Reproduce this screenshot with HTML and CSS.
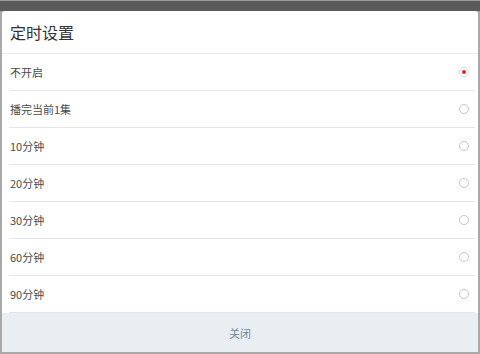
FILE: index.html
```html
<!DOCTYPE html>
<html lang="zh">
<head>
    <meta charset="UTF-8">
    <meta name="viewport" content="width=device-width, initial-scale=1.0">
    <title>定时设置</title>
    <link rel="stylesheet" href="styles.css">
</head>
<body>
    <div class="pantalla">
        <div class="barra-superior"></div>
        <div class="dialogo">
            <div class="titulo">定时设置</div>
            <ul class="opciones">
                <li class="opcion activa"><span>不开启</span><i class="radio"></i></li>
                <li class="opcion"><span>播完当前1集</span><i class="radio"></i></li>
                <li class="opcion"><span>10分钟</span><i class="radio"></i></li>
                <li class="opcion"><span>20分钟</span><i class="radio"></i></li>
                <li class="opcion"><span>30分钟</span><i class="radio"></i></li>
                <li class="opcion"><span>60分钟</span><i class="radio"></i></li>
                <li class="opcion"><span>90分钟</span><i class="radio"></i></li>
            </ul>
            <div class="pie">关闭</div>
        </div>
    </div>
</body>
</html>
```

FILE: styles.css
```css
body {
    margin: 0;
    font-family: "Noto Sans CJK SC", "Noto Sans", sans-serif;
    background-color: #a9a9a9;
}

.pantalla {
    width: 480px;
    height: 354px;
    display: flex;
    flex-direction: column;
}

.barra-superior {
    height: 10px;
    border-top: 1px solid #9c9c9c;
    background-color: #5a5a5a;
    flex-shrink: 0;
}

.dialogo {
    flex: 1;
    margin: 0 2px 2px 2px;
    background-color: white;
    border-radius: 3px 3px 0 0;
    display: flex;
    flex-direction: column;
    overflow: hidden;
}

.titulo {
    height: 42px;
    line-height: 42px;
    padding-left: 8px;
    font-size: 16px;
    color: #333;
    border-bottom: 1px solid #ececec;
    flex-shrink: 0;
}

.opciones {
    list-style: none;
    margin: 0;
    padding: 0 3px 0 7px;
}

.opcion {
    height: 36px;
    border-bottom: 1px solid #e6e6e6;
    display: flex;
    align-items: center;
    justify-content: space-between;
    padding: 0 6px 0 1px;
    font-size: 11px;
    color: #4a4a4a;
}

.radio {
    width: 8px;
    height: 8px;
    border: 1.5px solid #c4c4c4;
    border-radius: 50%;
    display: flex;
    align-items: center;
    justify-content: center;
}

.activa .radio::after {
    content: "";
    width: 4px;
    height: 4px;
    border-radius: 50%;
    background-color: #e8212b;
}

.activa .radio {
    border-color: #d8d8d8;
}

.pie {
    flex: 1;
    background-color: #e9eef2;
    display: flex;
    align-items: center;
    justify-content: center;
    font-size: 11px;
    color: #6f8aa3;
}
```
